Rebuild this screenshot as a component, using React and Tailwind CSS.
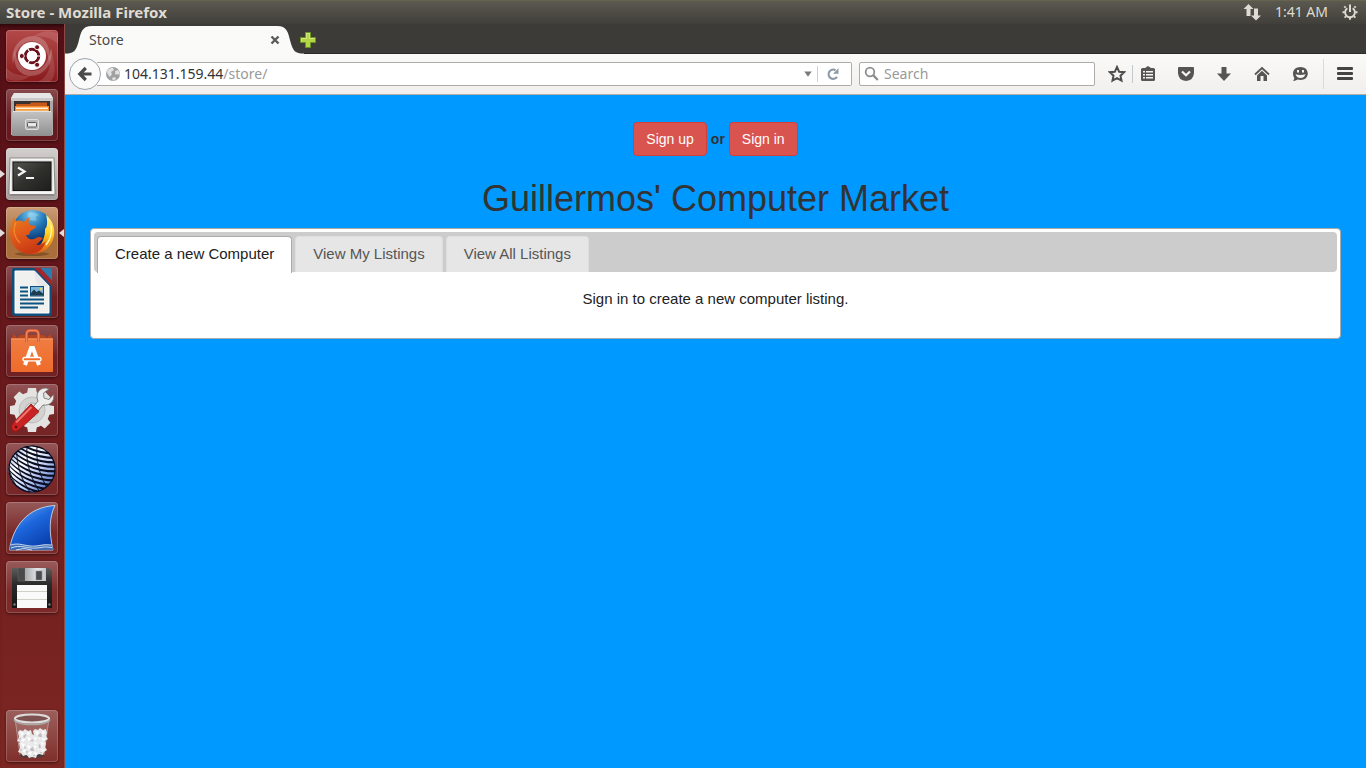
import React, { useState } from "react";

/* ---------- launcher icons (52 x 52) ---------- */

function Art({ children }) {
  return (
    <svg viewBox="0 0 52 52" className="block size-full" aria-hidden="true">
      {children}
    </svg>
  );
}

function DashIcon() {
  return (
    <Art>
      <g fill="#fff">
        <path d="M7 34C4 18 14 6 28 6C40 7 46 18 43 32C42 20 36 12 26 11C16 11 9 20 7 34Z" opacity=".22" />
        <path d="M45 18C48 34 38 46 24 46C12 45 6 34 9 20C10 32 16 40 26 41C36 41 43 32 45 18Z" opacity=".22" />
        <path d="M28 6C36 0 46 0 52 4V14C46 8 38 6 28 6Z" opacity=".12" />
        <path d="M24 46C16 52 6 52 0 48V38C6 44 14 46 24 46Z" opacity=".12" />
        <path d="M43 32C45 40 40 48 32 52H44C50 46 50 38 45 18Z" opacity=".12" />
      </g>
      <circle cx="26" cy="26" r="14" fill="#fff" />
      <circle cx="26" cy="26" r="6.8" fill="none" stroke="#6d1119" strokeWidth="3" />
      <g stroke="#fff" strokeWidth="1.2">
        <path d="M26 26L35.5 26M26 26L21.2 34.5M26 26L21.2 17.5" />
      </g>
      <circle cx="26" cy="26" r="5.2" fill="#fff" />
      <g fill="#6d1119" stroke="#fff" strokeWidth=".9">
        <circle cx="15.8" cy="26" r="2.5" />
        <circle cx="31.1" cy="17.2" r="2.5" />
        <circle cx="31.1" cy="34.8" r="2.5" />
      </g>
    </Art>
  );
}

function FilesIcon() {
  return (
    <Art>
      <defs>
        <linearGradient id="cab" x1="0" y1="0" x2="0" y2="1">
          <stop offset="0" stopColor="#c4c4c4" />
          <stop offset="1" stopColor="#8f8f8f" />
        </linearGradient>
      </defs>
      <path d="M8 4H44L47 9V46H5V9Z" fill="#a9a9a9" />
      <path d="M8 4H44L47 9H5Z" fill="#e6e6e6" />
      <path d="M5 9H47V12H5Z" fill="#c9c9c9" />
      <path d="M8 12H44V23H8Z" fill="#3a3230" />
      <path d="M10 15L24 15L25 13.5H41V23H10Z" fill="#c9581b" />
      <path d="M9 17H43V23H9Z" fill="#f08a2a" />
      <path d="M10 18.5H42V20H10Z" fill="#fff1dc" />
      <path d="M10 20.5H42V22H10Z" fill="#f6b25c" />
      <path d="M7 22H45L46 24V46Q46 47 45 47H7Q6 47 6 46V24Z" fill="url(#cab)" />
      <path d="M7 22.5H45" stroke="#e2e2e2" />
      <rect x="19.5" y="30.5" width="13" height="10" rx="1.5" fill="#b8b8b8" stroke="#dedede" />
      <rect x="21.5" y="33.5" width="9" height="4.5" rx="1" fill="#e8e8e8" stroke="#5a5a5a" />
    </Art>
  );
}

function TerminalIcon() {
  return (
    <Art>
      <defs>
        <linearGradient id="scr" x1="0" y1="0" x2="1" y2="1">
          <stop offset="0" stopColor="#55554f" />
          <stop offset=".5" stopColor="#30302d" />
          <stop offset="1" stopColor="#1e1e1c" />
        </linearGradient>
      </defs>
      <path d="M4 46H48V48H4Z" fill="#7e7a78" opacity=".6" />
      <path d="M4 10H48L49 45Q49 46.5 47.5 46.5H4.5Q3 46.5 3 45Z" fill="#f6f6f5" stroke="#6d6a68" strokeWidth=".7" />
      <rect x="5.5" y="12.5" width="41" height="31" fill="#d2d1cf" />
      <rect x="7" y="14" width="38" height="28.5" fill="url(#scr)" stroke="#111" />
      <path d="M12 19.5L18.5 23.5L12 27.5" fill="none" stroke="#f4f4f4" strokeWidth="2.2" />
      <path d="M20 30H28" stroke="#f4f4f4" strokeWidth="2" />
    </Art>
  );
}

function FirefoxIcon() {
  return (
    <Art>
      <defs>
        <radialGradient id="sea" cx=".45" cy=".1" r=".9">
          <stop offset="0" stopColor="#7cc9ee" />
          <stop offset=".4" stopColor="#1f74b5" />
          <stop offset=".8" stopColor="#0c2c66" />
        </radialGradient>
        <linearGradient id="fox" x1="0" y1="0" x2=".4" y2="1">
          <stop offset="0" stopColor="#e8801f" />
          <stop offset=".5" stopColor="#e25a1a" />
          <stop offset="1" stopColor="#c93a14" />
        </linearGradient>
        <linearGradient id="tail" x1="0" y1="0" x2="0" y2="1">
          <stop offset="0" stopColor="#fff3a0" />
          <stop offset=".45" stopColor="#ffd21f" />
          <stop offset="1" stopColor="#e25a15" />
        </linearGradient>
      </defs>
      <ellipse cx="26" cy="47" rx="17" ry="2" fill="#5b3415" opacity=".45" />
      <circle cx="27" cy="23" r="20" fill="url(#sea)" />
      <path d="M22 6Q28 4 33 8Q28 9 31 13Q25 15 22 11Z" fill="#a8def5" opacity=".45" />
      <path d="M40 8C47 13 49 22 48 29C46 40 37 47 26 47C22 47 19 46 17 45C29 45 36 39 38 30C40 25 38 21 40 21C42 17 41 11 40 8Z" fill="url(#tail)" />
      <path d="M45 18C46 25 45 32 40 38" fill="none" stroke="#fff5b0" strokeWidth="1.4" />
      <path d="M8 9C8 12 9 13 10 14C13 13 16 14 18 15C20 12 22 11 24 10C23 13 22 15 23 17C25 19 28 18 30 19C30 22 26 22 24 25C24 28 22 28 20 28C21 32 26 34 30 31C33 29 36 30 37 32C35 32 34 35 30 38C35 38 38 36 40 34C37 43 31 47.5 24 47C12 47 4 37 4 26C4 19 6 16 8 9Z" fill="url(#fox)" />
      <path d="M10 15C7 22 8 30 14 36" fill="none" stroke="#f7a53a" strokeWidth="1.2" opacity=".6" />
    </Art>
  );
}

function WriterIcon() {
  return (
    <Art>
      <path d="M8 2H30L46 19V47Q46 50 43 50H9Q6 50 6 47V4Q6 2 8 2Z" fill="#0f4f7d" />
      <path d="M28 2H35L46 14V20Z" fill="#a3262b" />
      <path d="M34.5 2H44Q46 2 46 4V14.5Z" fill="#2c7cb2" />
      <path d="M9 5H28.5L43 20V47H9Z" fill="#f1f1f0" stroke="#fff" />
      <path d="M28.5 5L43 20H34Q28.5 17 28.5 5Z" fill="#dededd" opacity=".5" />
      <path d="M14 20.5H22V22.5H14ZM14 24.5H22V26.5H14ZM14 28.5H22V30.5H14ZM14 32.5H38V34.5H14ZM14 36.5H38V38.5H14ZM14 40.5H32V42.5H14Z" fill="#0f5280" />
      <rect x="24.5" y="20.5" width="13" height="9.5" fill="#7fb6dc" stroke="#0f4f7d" />
      <path d="M25 29.5V27L28 23.5L30.5 26L33 24.5L37 27.5V29.5Z" fill="#1d3c4d" />
      <circle cx="35" cy="23" r="1.3" fill="#f3d34a" />
    </Art>
  );
}

function SoftwareIcon() {
  return (
    <Art>
      <defs>
        <linearGradient id="bag" x1="0" y1="0" x2="0" y2="1">
          <stop offset="0" stopColor="#f07c42" />
          <stop offset="1" stopColor="#ee6c2a" />
        </linearGradient>
      </defs>
      <path d="M5 14L8 9L11 13L14 10H38L41 13L44 9L47 14Z" fill="#b9451d" />
      <rect x="5" y="13.5" width="42" height="33.5" fill="url(#bag)" />
      <path d="M5 14H47" stroke="#f79a68" />
      <path d="M20.5 17V10Q20.5 5.5 24 5.5H29Q32.5 5.5 32.5 10V17" fill="none" stroke="#d9562a" strokeWidth="3" />
      <path d="M20.5 17V10Q20.5 5.5 24 5.5H29Q32.5 5.5 32.5 10V17" fill="none" stroke="#f0845a" strokeWidth="1.4" />
      <g stroke="#fff" fill="none">
        <path d="M19 40L25 23H27L33 40" strokeWidth="4" />
        <rect x="17" y="32.5" width="18" height="3.4" rx="1.5" strokeWidth="1.4" fill="#ee6c2a" />
      </g>
    </Art>
  );
}

function SettingsIcon() {
  const teeth = [0, 45, 90, 135, 180, 225, 270, 315];
  return (
    <Art>
      <g fill="#e3e3e2">
        {teeth.map((a) => (
          <path key={a} d="M20.5 13L22 4H30L31.5 13Z" transform={`rotate(${a} 26 26)`} />
        ))}
      </g>
      <circle cx="26" cy="26" r="18" fill="#e3e3e2" />
      <circle cx="26" cy="26" r="13" fill="#d2d2d1" stroke="#bdbdbc" />
      <circle cx="26" cy="26" r="7" fill="#dededd" stroke="#b1b1b0" />
      <path d="M27 23L32 17C29 10 33 4 40 4L43 5L37.500 9L38 14L43 15.500L47.500 10.500C49 17 44 22 37 21L32 27Z" fill="#ededed" stroke="#777" strokeWidth=".9" />
      <path d="M25 20L33 27.500L13 46Q9 49 6 46Q3.500 42.500 7 39Z" fill="#c92222" stroke="#8c1111" strokeWidth=".8" />
      <path d="M25.500 23L10 38.500" stroke="#ee736b" strokeWidth="2.200" />
      <circle cx="10" cy="43" r="1.200" fill="#5f0d0d" />
    </Art>
  );
}

function SphereIcon() {
  const rows = [-30, -25.5, -21, -16.5, -12, -7.500, -3, 1.500, 6, 10.500, 15, 19.500, 24];
  const cross = [2, 12, 22, 32];
  return (
    <Art>
      <defs>
        <clipPath id="ball">
          <circle cx="26" cy="26" r="23.5" />
        </clipPath>
        <linearGradient id="sheen" gradientUnits="userSpaceOnUse" x1="4" y1="6" x2="46" y2="46">
          <stop offset="0" stopColor="#8ea6dc" />
          <stop offset=".3" stopColor="#ffffff" />
          <stop offset=".6" stopColor="#c3d2f6" />
          <stop offset="1" stopColor="#3f62bd" />
        </linearGradient>
      </defs>
      <circle cx="26" cy="26" r="23.5" fill="#0a0d20" />
      <g clipPath="url(#ball)" fill="none">
        {rows.map((y) => (
          <path key={y} d={`M-2 ${y + 12}C8 ${y + 28} 28 ${y + 40} 56 ${y + 38}`} stroke="url(#sheen)" strokeWidth="2.2" />
        ))}
        {cross.map((x) => (
          <path key={x} d={`M${x} -2C${x - 4} 16 ${x + 2} 38 ${x + 16} 54`} stroke="#0a0d20" strokeWidth="1.1" opacity=".8" />
        ))}
      </g>
      <circle cx="26" cy="26" r="23" fill="none" stroke="#0a0d20" strokeWidth="1.2" />
    </Art>
  );
}

function SharkIcon() {
  return (
    <Art>
      <defs>
        <linearGradient id="fin" x1="0" y1="0" x2=".6" y2="1">
          <stop offset="0" stopColor="#6fb2f7" />
          <stop offset=".5" stopColor="#1c66dc" />
          <stop offset="1" stopColor="#0a3fae" />
        </linearGradient>
      </defs>
      <path d="M3.5 48C7 24 22 5 49 3.5C43 15 43 30 47 48Z" fill="url(#fin)" stroke="#dbe6f5" strokeWidth=".8" />
      <path d="M4 44C12 39 20 46 30 44C36 42 42 42 46 43L47 48H3.5Z" fill="#3f6db3" />
      <path d="M5 43C13 40 20 45 30 44Q40 42 46 43M5 46C14 42 22 47 31 46Q40 44 46 45.5M10 48Q18 45 26 48" fill="none" stroke="#c9d9ee" strokeWidth="1" />
    </Art>
  );
}

function FloppyIcon() {
  return (
    <Art>
      <defs>
        <linearGradient id="disk" x1="0" y1="0" x2="0" y2="1">
          <stop offset="0" stopColor="#5c5c5c" />
          <stop offset=".4" stopColor="#2b2b2b" />
          <stop offset="1" stopColor="#151515" />
        </linearGradient>
        <linearGradient id="shut" x1="0" y1="0" x2="1" y2="0">
          <stop offset="0" stopColor="#a8aaad" />
          <stop offset=".6" stopColor="#e4e5e6" />
          <stop offset="1" stopColor="#c2c4c6" />
        </linearGradient>
      </defs>
      <path d="M6 7H43L46 10V47H6Z" fill="url(#disk)" />
      <path d="M12 7V20H19V7Z" fill="#4a4a4a" stroke="#6a6a6a" strokeWidth=".5" />
      <rect x="19" y="7" width="21" height="13" fill="url(#shut)" />
      <rect x="30" y="10" width="6" height="9" fill="#4a4c50" stroke="#8b8d90" strokeWidth=".6" />
      <rect x="11" y="24" width="30" height="23" fill="#fafafa" />
      <path d="M11 30.500H41M11 38.500H41" stroke="#cfd0c8" />
      <path d="M7.500 42.500H9.500V44.500H7.500ZM42.500 42.500H44.500V44.500H42.500Z" fill="#8a8a8a" />
    </Art>
  );
}

function PaperBall({ x, y }) {
  return (
    <g transform={`translate(${x} ${y})`}>
      <path
        d="M-7 -5L-5 -7L-2 -6L0 -8L3 -6L6 -7L7 -3L6 0L8 3L5 5L4 8L0 7L-3 8L-5 5L-8 4L-6 0Z"
        fill="#e9e9e9"
      />
      <path d="M-5 -5L-1 -4L-3 0ZM2 -5L5 -4L3 -1ZM-4 3L0 1L-1 5ZM2 2L6 3L3 5Z" fill="#fff" />
      <path d="M-2 -1L1 -3L2 1L-1 1ZM-6 1L-4 1L-5 4ZM1 5L3 5L2 7Z" fill="#bdbdbd" />
    </g>
  );
}

function TrashIcon() {
  return (
    <Art>
      <path d="M9 10L14 45Q26 50 38 45L43 10Z" fill="#fff" opacity=".12" />
      <path d="M9.5 12L14 45M42.500 12L38 45" stroke="#d9c9c8" strokeWidth=".8" opacity=".6" />
      <ellipse cx="26" cy="45.500" rx="12.500" ry="2.500" fill="#4c3c3b" />
      <PaperBall x={19} y={27} />
      <PaperBall x={34} y={26} />
      <PaperBall x={26} y={32} />
      <PaperBall x={20} y={38} />
      <PaperBall x={33} y={37} />
      <PaperBall x={26} y={40} />
      <ellipse cx="26" cy="8.500" rx="17" ry="4" fill="#7d5150" stroke="#dcdcda" strokeWidth="2.200" />
      <path d="M8 9.500Q10 14.500 26 14.500Q42 14.500 44 9.500" fill="none" stroke="#a9a9a6" strokeWidth="1.500" />
    </Art>
  );
}

const APPS = [
  { name: "Dash", Icon: DashIcon, tile: "bg-linear-to-b from-[#b4494a] to-[#8a1a1c]" },
  { name: "Files", Icon: FilesIcon, tile: "bg-linear-to-b from-[#884a4e] to-[#661a20] to-60%" },
  { name: "Terminal", Icon: TerminalIcon, tile: "bg-linear-to-b from-[#d3cfcd] to-[#a49d9b]", left: true },
  { name: "Firefox", Icon: FirefoxIcon, tile: "bg-linear-to-b from-[#cb9c76] to-[#aa6e3b] to-60%", left: true, right: true },
  { name: "LibreOffice Writer", Icon: WriterIcon, tile: "bg-linear-to-b from-[#8c4f52] to-[#6b1f23] to-60%" },
  { name: "Software Center", Icon: SoftwareIcon, tile: "bg-linear-to-b from-[#8e5052] to-[#6f2124] to-60%" },
  { name: "System Settings", Icon: SettingsIcon, tile: "bg-linear-to-b from-[#925557] to-[#752526] to-60%" },
  { name: "Sphere", Icon: SphereIcon, tile: "bg-linear-to-b from-[#945758] to-[#772727] to-60%" },
  { name: "Wireshark", Icon: SharkIcon, tile: "bg-linear-to-b from-[#965959] to-[#792828] to-60%" },
  { name: "Floppy Disk", Icon: FloppyIcon, tile: "bg-linear-to-b from-[#985b5a] to-[#7b2a29] to-60%" },
];

function LauncherItem({ name, Icon, tile, left, right }) {
  return (
    <li className="relative flex justify-center">
      {left && (
        <svg viewBox="0 0 5 8" className="absolute top-[22px] left-0 h-2 w-[5px]" aria-hidden="true">
          <path d="M0 0L5 4L0 8Z" fill="#e3dcdc" />
        </svg>
      )}
      <button
        type="button"
        aria-label={name}
        className={`size-[52px] overflow-hidden rounded shadow-[inset_0_0_0_1px_rgba(255,255,255,0.18),0_1px_3px_rgba(0,0,0,0.5)] ${tile}`}
      >
        <Icon />
      </button>
      {right && (
        <svg viewBox="0 0 5 8" className="absolute top-[22px] right-0 h-2 w-[5px]" aria-hidden="true">
          <path d="M5 0L0 4L5 8Z" fill="#e3dcdc" />
        </svg>
      )}
    </li>
  );
}

function Launcher() {
  return (
    <nav
      aria-label="Launcher"
      className="w-[65px] shrink-0 border-r border-[#8d4a48] bg-linear-to-b from-[#560f16] via-[#6b1a1d] to-[#7d2723] shadow-[inset_0_5px_5px_-3px_rgba(0,0,0,0.6)]"
    >
      <ul className="flex h-full flex-col gap-[7px] py-1.5">
        {APPS.map((a) => (
          <LauncherItem key={a.name} {...a} />
        ))}
        <li className="grow" aria-hidden="true" />
        <LauncherItem name="Trash" Icon={TrashIcon} tile="bg-linear-to-b from-[#9c5f5c] to-[#7f2e2a]" />
      </ul>
    </nav>
  );
}

/* ---------- top panel ---------- */

function TopPanel() {
  return (
    <header className="flex h-6 shrink-0 items-center justify-between border-t border-[#66634f] bg-linear-to-b from-[#5c5950] to-[#403f3a] pr-2 pb-0.5 pl-1.5 text-[#dfdbd2]">
      <h1 className="text-[15px] leading-5 font-bold">Store - Mozilla Firefox</h1>
      <div className="flex items-center gap-3.5">
        <svg viewBox="0 0 18 18" className="size-[18px]" fill="#dfdbd2" aria-label="Network">
          <path d="M5.5 1L10.500 6H7.500V13H3.500V6H.5Z" />
          <path d="M13 17.500L8 12.500H11V5.500H15V12.500H18Z" />
        </svg>
        <time className="text-[14px] leading-5">1:41 AM</time>
        <svg viewBox="0 0 16 16" className="size-4" fill="none" stroke="#dfdbd2" aria-label="System">
          <path d="M5.3 4.200A4.900 4.900 0 1 0 10.700 4.200" strokeWidth="1.900" />
          <path d="M8 .5V8" strokeWidth="2" />
          <path d="M3.6 3.600L2.300 2.300M12.400 3.600L13.700 2.300M2.600 8.300H.5M13.400 8.300H15.500M4 12.300L2.600 13.700M12 12.300L13.400 13.700M8 13.500V15.800" strokeWidth="1.900" />
        </svg>
      </div>
    </header>
  );
}

/* ---------- browser chrome ---------- */

function TabStrip() {
  return (
    <div className="flex h-[30px] items-start bg-[#3c3b37] shadow-[inset_0_-1px_0_#2b2a27]">
      <div className="relative flex h-[30px] w-60 items-center justify-between pt-0.5 pr-[25px] pl-6">
        <svg viewBox="0 0 240 30" className="absolute inset-0 h-[30px] w-60" aria-hidden="true">
          <path d="M0 30V29.5C9 29.5 11 27 13.500 18C16 8 17 2 27 2H212C222 2 223 8 225.500 18C228 27 230 29.500 239 29.500V30Z" fill="#fafaf9" />
        </svg>
        <span className="relative text-[14px] leading-5 text-[#4a4a4a]">Store</span>
        <button type="button" aria-label="Close tab" className="relative">
          <svg viewBox="0 0 10 10" className="size-2.5" stroke="#5b5b5b" strokeWidth="2.4">
            <path d="M1.5 1.5L8.500 8.500M8.500 1.500L1.500 8.500" />
          </svg>
        </button>
      </div>
      <button type="button" aria-label="New tab" className="-ml-1.5 mt-[7px]">
        <svg viewBox="0 0 18 18" className="size-[18px]">
          <path d="M6.5 1.500H11.500V6.500H16.500V11.500H11.500V16.500H6.500V11.500H1.500V6.500H6.500Z" fill="#b5d545" stroke="#6b9426" />
          <path d="M2.500 10.500V7.500H7.500V2.500H10.500V7.500H15.500" fill="none" stroke="#d3e880" />
        </svg>
      </button>
    </div>
  );
}

function ToolButton({ label, children }) {
  return (
    <button type="button" aria-label={label} className="block size-[18px]">
      <svg viewBox="0 0 18 18" className="size-[18px]" fill="#555">
        {children}
      </svg>
    </button>
  );
}

function NavBar() {
  return (
    <div className="flex h-[41px] items-center border-b border-[#b3ada6] bg-linear-to-b from-[#fafaf9] to-[#f1efed] pr-3 pl-1">
      <button
        type="button"
        aria-label="Back"
        className="relative flex size-8 shrink-0 items-center justify-center rounded-full border border-[#9aa3ad] bg-[#fbfbfb]"
      >
        <svg viewBox="0 0 16 16" className="size-4" fill="none" stroke="#4a4a4a" strokeWidth="3.2">
          <path d="M8.800 2L2.800 8L8.800 14M3 8H14.500" />
        </svg>
      </button>
      <div className="-ml-1 flex h-6 min-w-0 grow items-center rounded-r-xs border border-l-0 border-[#aeaca8] bg-white pr-[11px] pl-2">
        <svg viewBox="0 0 16 16" className="size-4 shrink-0" aria-hidden="true">
          <circle cx="8" cy="8" r="7" fill="#a0a0a0" />
          <path d="M2 5Q4 2 8 1.800L9 4L6 6L7 8L5 11L2.500 8ZM10 5L13 4Q15 7 14.500 9L12 8L10.500 9ZM7 12L10 11L11 13L8 14.800Z" fill="#e2e2e2" />
        </svg>
        <div className="ml-[3px] grow text-[14px] leading-5 text-[#999]" aria-label="Address">
          <span className="text-[#333]">104.131.159.44</span>/store/
        </div>
        <button type="button" aria-label="History" className="mr-[5px]">
          <svg viewBox="0 0 8 6" className="h-1.5 w-2">
            <path d="M.3 .5H7.700L4 5.800Z" fill="#7a7a7a" />
          </svg>
        </button>
        <span className="mr-2 h-4 w-px bg-[#d0d0d0]" />
        <button type="button" aria-label="Reload">
          <svg viewBox="0 0 14 14" className="size-3.5" fill="none" stroke="#8d99a6" strokeWidth="2.2">
            <path d="M11 9.800A4.600 4.600 0 1 1 9.500 3.200" />
            <path d="M12.500 1.200V6.800H7Z" fill="#8d99a6" stroke="none" />
          </svg>
        </button>
      </div>
      <label className="ml-[7px] flex h-6 w-[236px] items-center gap-1 rounded-xs border border-[#aeaca8] bg-white pl-1">
        <svg viewBox="0 0 16 16" className="size-4 shrink-0" fill="none" stroke="#8f8f8f" aria-hidden="true">
          <circle cx="6" cy="6" r="4.3" strokeWidth="1.8" />
          <path d="M9.200 9.200L13.800 14" strokeWidth="2.4" />
        </svg>
        <input
          type="text"
          aria-label="Search"
          placeholder="Search"
          className="w-full min-w-0 bg-transparent text-[14px] leading-5 text-[#333] outline-none placeholder:text-[#999]"
        />
      </label>
      <div className="ml-[13px] flex items-center gap-5">
        <div className="flex items-center gap-1.5">
          <ToolButton label="Bookmark">
            <path d="M9 2L11.200 6.800L16.200 7.200L12.500 10.700L13.500 15.700L9 13.200L4.500 15.700L5.500 10.700L1.800 7.200L6.800 6.800Z" fill="none" stroke="#4d4d4d" strokeWidth="2" />
          </ToolButton>
          <span className="h-[18px] w-px bg-[#c3c8cd]" />
          <ToolButton label="Bookmarks list">
            <path d="M6 3L9 1L12 3H14.500Q16 3 16 4.500V14.500Q16 16 14.500 16H3.500Q2 16 2 14.500V4.500Q2 3 3.500 3Z" />
            <path d="M4 6H6V7.500H4ZM7 6H14V7.500H7ZM4 9H6V10.500H4ZM7 9H14V10.500H7ZM4 12H6V13.500H4ZM7 12H14V13.500H7Z" fill="#f6f5f4" />
          </ToolButton>
        </div>
        <ToolButton label="Pocket">
          <path d="M2 2H16Q17 2 17 3V8Q16.500 15.500 9 16Q1.500 15.500 1 8V3Q1 2 2 2Z" />
          <path d="M5 6.500L9 10.300L13 6.500" fill="none" stroke="#f6f5f4" strokeWidth="2.2" />
        </ToolButton>
        <ToolButton label="Downloads">
          <path d="M6.500 2H11.500V8.500H16L9 16L2 8.500H6.500Z" />
        </ToolButton>
        <ToolButton label="Home">
          <path d="M2 9.500L9 3L16 9.500" fill="none" stroke="#555" strokeWidth="1.8" />
          <path d="M4 10.500L9 5.800L14 10.500V16H10.500V11H7.500V16H4Z" />
        </ToolButton>
        <ToolButton label="Chat">
          <path d="M9.500 2C13.800 2 16.800 4.800 16.800 8.500S13.800 15 9.500 15Q8 15 6.700 14.600Q5 16 2 16Q3.300 14.500 3.300 13Q2 11 2 8.500C2 4.800 5 2 9.500 2Z" />
          <path d="M6 5H8V7.500H6ZM11 5H13V7.500H11Z" fill="#f6f5f4" />
          <path d="M4.500 9.300Q9.500 10.800 14.500 9.300Q13.500 13 9.500 13T4.500 9.300Z" fill="#f6f5f4" />
        </ToolButton>
      </div>
      <span className="ml-3.5 h-[30px] w-px bg-[#dcd9d6]" />
      <div className="ml-3">
        <ToolButton label="Menu">
          <g fill="#444">
            <rect x="1" y="2" width="16" height="3" rx="1" />
            <rect x="1" y="7" width="16" height="3" rx="1" />
            <rect x="1" y="12" width="16" height="3" rx="1" />
          </g>
        </ToolButton>
      </div>
    </div>
  );
}

/* ---------- store page ---------- */

const TABS = [
  { label: "Create a new Computer", body: "Sign in to create a new computer listing." },
  { label: "View My Listings", body: "Sign in to view your listings." },
  { label: "View All Listings", body: "Sign in to view all listings." },
];

function StorePage() {
  const [active, setActive] = useState(0);
  const btn = "h-[34px] rounded border border-[#d43f3a] bg-[#d9534f] px-3 text-white";
  return (
    <main className="grow bg-[#0099ff] px-[25px] pt-[27px] font-['Liberation_Sans',Arial,sans-serif]">
      <div className="flex items-center justify-center gap-1 text-[14px] leading-5 text-[#333]">
        <button type="button" className={btn}>Sign up</button>
        <b>or</b>
        <button type="button" className={btn}>Sign in</button>
      </div>
      <h2 className="mt-[23px] text-center text-[36px] leading-10 text-[#333]">
        Guillermos' Computer Market
      </h2>
      <section className="mt-[9px] rounded border border-[#aaa] bg-white p-[3px] text-[15px] leading-5 text-[#222]">
        <div role="tablist" className="flex h-10 items-end gap-[3px] rounded bg-[#ccc] px-[3px]">
          {TABS.map((t, i) => (
            <button
              key={t.label}
              type="button"
              role="tab"
              aria-selected={i === active}
              onClick={() => setActive(i)}
              className={
                i === active
                  ? "-mb-px h-[37px] rounded-t border border-b-0 border-[#aaa] bg-white px-[17px] pb-0.5 text-[#212121]"
                  : "h-9 rounded-t border border-b-0 border-[#dedede] bg-[#e6e6e6] px-[17px] pb-0.5 text-[#555]"
              }
            >
              {t.label}
            </button>
          ))}
        </div>
        <p role="tabpanel" className="px-5 pt-[17px] pb-[26px] text-center">
          {TABS[active].body}
        </p>
      </section>
    </main>
  );
}

export default function App() {
  return (
    <div className="flex min-h-screen flex-col font-['Noto_Sans','Open_Sans',sans-serif]">
      <TopPanel />
      <div className="flex grow">
        <Launcher />
        <div className="flex min-w-0 grow flex-col">
          <TabStrip />
          <NavBar />
          <StorePage />
        </div>
      </div>
    </div>
  );
}
